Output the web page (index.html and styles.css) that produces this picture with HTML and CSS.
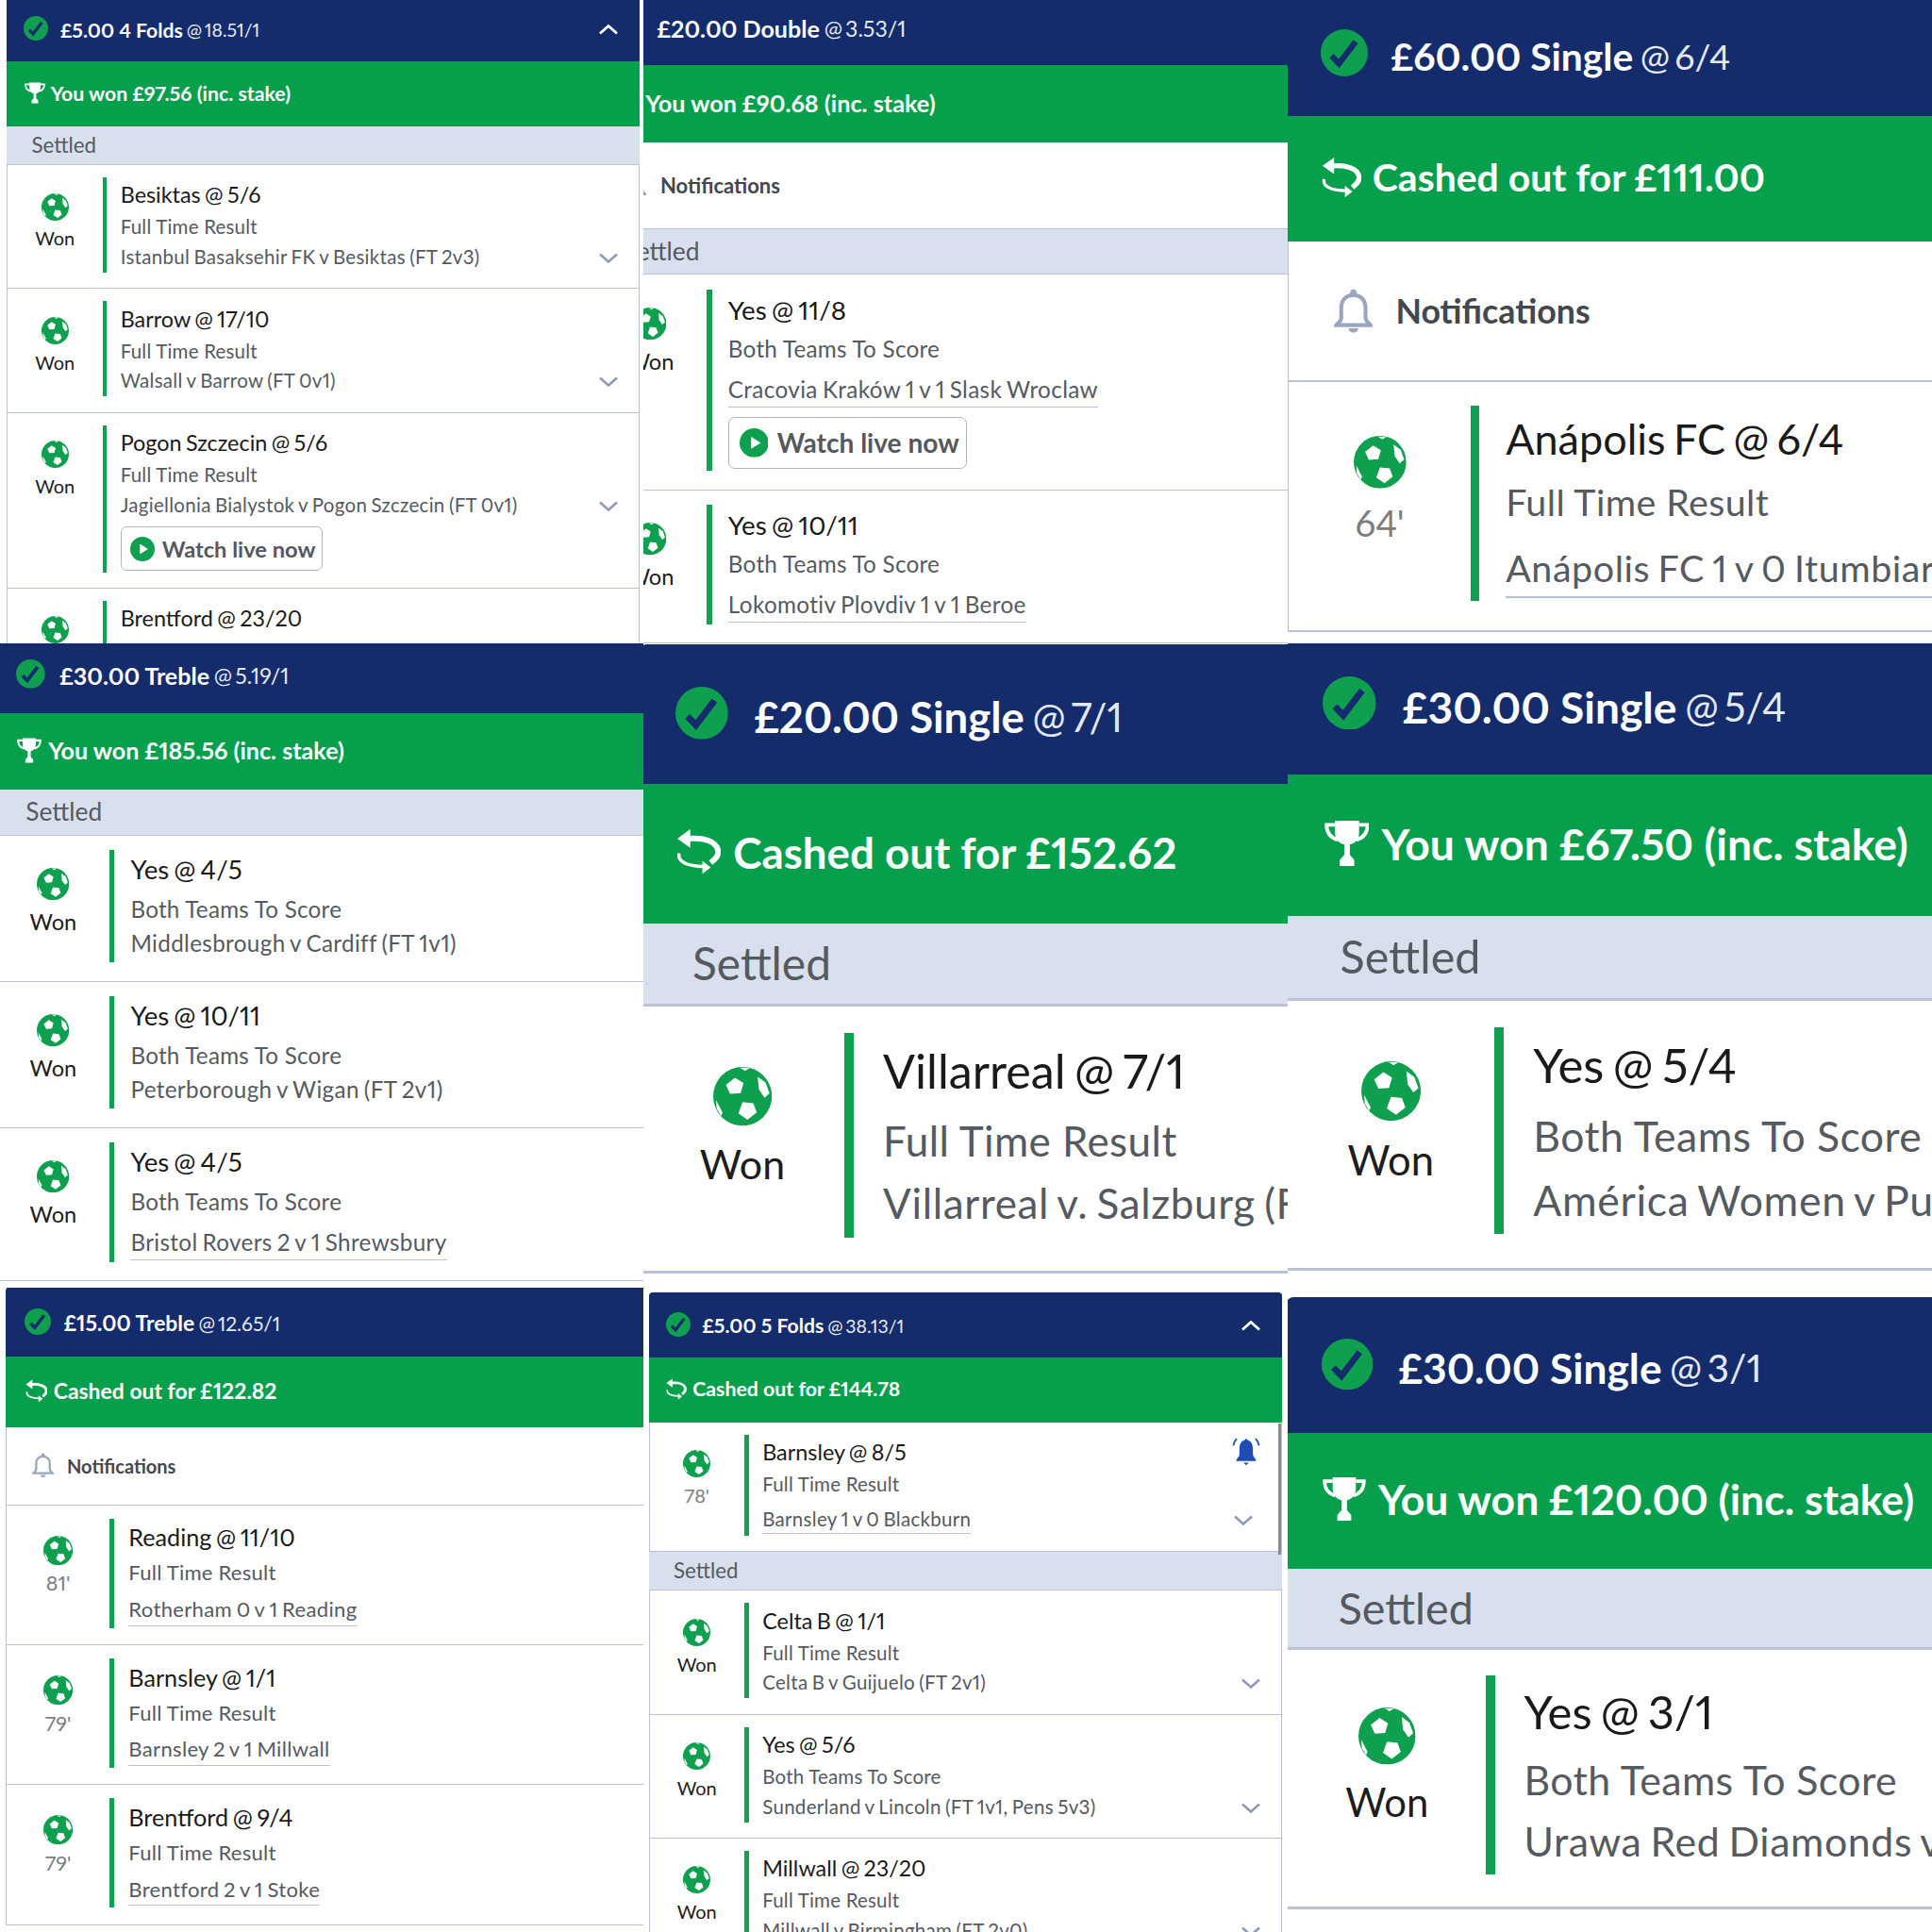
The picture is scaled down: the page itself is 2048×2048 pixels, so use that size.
FILE: index.html
```html
<!DOCTYPE html>
<html lang="en">
<head>
  <meta charset="UTF-8" />
  <title>Winning bets</title>
  <link rel="stylesheet" href="styles.css">
</head>
<body>
  <!-- shared icons -->
  <svg class="sprite" aria-hidden="true">
    <symbol id="check" viewBox="0 0 24 24">
      <circle cx="12" cy="12" r="12" fill="#0fa04f"/>
      <path d="M5.5 13.5 9.3 17.5 17.8 6.3" fill="none" stroke="#142c6c" stroke-width="3"/>
    </symbol>
    <symbol id="ball" viewBox="0 0 24 24">
      <circle cx="12" cy="12" r="12" fill="#0fa04f"/>
      <polygon fill="#fff" points="8.9,4.4 12.4,6.6 11.2,10.7 6.9,11 5.2,7.3"/>
      <polygon fill="#fff" points="18.2,4 21.4,6.4 23,10.8 21,12.6 18.7,9.2"/>
      <polygon fill="#fff" points="12,14.4 16.4,14.8 17.8,18.6 14,21.6 10.3,19"/>
      <polygon fill="#fff" points="1.2,13.6 3.8,18.6 3.2,20 1.4,17"/>
      <polygon fill="#fff" points="11,.3 15,.4 13,1.6"/>
    </symbol>
    <symbol id="trophy" viewBox="1 .5 22 23.500">
      <path fill="#fff" d="M6 1h12v6c0 3.600-2.500 6-6 6s-6-2.400-6-6z"/>
      <path fill="none" stroke="#fff" stroke-width="1.800" d="M6 3H1.800c0 4 2 6.500 5.500 7.500M18 3h4.200c0 4-2 6.500-5.500 7.500"/>
      <path fill="#fff" d="M10.600 12h2.800v6l2.200 2.500v3H8.400v-3l2.200-2.500z"/>
    </symbol>
    <symbol id="cashout" viewBox="0 0 24 24">
      <polygon fill="#fff" points="7.500,0 .5,5 7.500,10"/>
      <path fill="none" stroke="#fff" stroke-width="3" d="M7 5c7-.5 15 1 15.500 7 .2 2.500-1.500 4-4 6"/>
      <path fill="none" stroke="#fff" stroke-width="1.800" d="M1.500 13c-1 4 3.500 7 13.500 7"/>
      <polygon fill="#fff" points="14,17 18.500,20.500 14,24"/>
    </symbol>
    <symbol id="bell" viewBox="0 0 24 28">
      <path fill="none" stroke="#9aa5bf" stroke-width="2.400" d="M12 4c-5 0-7.500 3.500-7.500 8v6c0 2-2 3-3 4.500h21c-1-1.500-3-2.500-3-4.500v-6c0-4.500-2.500-8-7.500-8z"/>
      <circle cx="12" cy="2.500" r="2" fill="#9aa5bf"/>
      <path fill="#9aa5bf" d="M9 24.500h6c0 3.500-6 3.500-6 0z"/>
    </symbol>
    <symbol id="bell-on" viewBox="2 1.700 20 21">
      <path fill="#1e4db7" d="M12 3.500c-3.500 0-5 3-5 6.500v4c0 2-2 3-2.500 5h15c-.5-2-2.500-3-2.500-5v-4c0-3.500-1.500-6.500-5-6.500z"/>
      <circle cx="12" cy="3.500" r="1" fill="#1e4db7"/>
      <path fill="#1e4db7" d="M10 20.200h4l-2 2z"/>
      <path fill="none" stroke="#1e4db7" stroke-width="1.300" d="M5 2.500C3.500 4 2.800 5.500 2.500 7.500M19 2.500c1.500 1.500 2.200 3 2.500 5"/>
    </symbol>
    <symbol id="play" viewBox="0 0 24 24">
      <circle cx="12" cy="12" r="12" fill="#0fa04f"/>
      <polygon fill="#fff" points="9.500,7 17.500,12 9.500,17"/>
    </symbol>
    <symbol id="chev-down" viewBox="0 0 20 11">
      <path fill="none" stroke="#8d9ab8" stroke-width="2.600" d="M1 1.500 10 9.500l9-8"/>
    </symbol>
    <symbol id="chev-up" viewBox="0 0 20 11">
      <path fill="none" stroke="#fff" stroke-width="2.800" d="M1 9.500 10 1.500l9 8"/>
    </symbol>
  </svg>

  <div class="collage">

    <div class="tile tile-1">
      <div class="slip">
        <div class="slip-head">
          <svg class="check"><use href="#check"/></svg>
          <span class="stake">£5.00 4 Folds</span><span class="odds">@ 18.51/1</span>
          <svg class="head-chev"><use href="#chev-up"/></svg>
        </div>
        <div class="slip-result">
          <svg class="result-icon"><use href="#trophy"/></svg>
          <span>You won £97.56 (inc. stake)</span>
        </div>
        <div class="settled">Settled</div>
        <div class="leg">
          <div class="leg-status"><svg class="ball"><use href="#ball"/></svg><span class="status-text">Won</span></div>
          <div class="leg-bar"></div>
          <div class="leg-body">
            <div class="leg-title">Besiktas @ 5/6</div>
            <div class="leg-market">Full Time Result</div>
            <div class="leg-match">Istanbul Basaksehir FK v Besiktas (FT 2v3)</div>
          </div>
          <div class="leg-aside"><svg class="leg-chev"><use href="#chev-down"/></svg></div>
        </div>
        <div class="leg">
          <div class="leg-status"><svg class="ball"><use href="#ball"/></svg><span class="status-text">Won</span></div>
          <div class="leg-bar"></div>
          <div class="leg-body">
            <div class="leg-title">Barrow @ 17/10</div>
            <div class="leg-market">Full Time Result</div>
            <div class="leg-match">Walsall v Barrow (FT 0v1)</div>
          </div>
          <div class="leg-aside"><svg class="leg-chev"><use href="#chev-down"/></svg></div>
        </div>
        <div class="leg">
          <div class="leg-status"><svg class="ball"><use href="#ball"/></svg><span class="status-text">Won</span></div>
          <div class="leg-bar"></div>
          <div class="leg-body">
            <div class="leg-title">Pogon Szczecin @ 5/6</div>
            <div class="leg-market">Full Time Result</div>
            <div class="leg-match">Jagiellonia Bialystok v Pogon Szczecin (FT 0v1)</div>
            <div class="watch"><svg class="watch-icon"><use href="#play"/></svg>Watch live now</div>
          </div>
          <div class="leg-aside"><svg class="leg-chev"><use href="#chev-down"/></svg></div>
        </div>
        <div class="leg">
          <div class="leg-status"><svg class="ball"><use href="#ball"/></svg></div>
          <div class="leg-bar"></div>
          <div class="leg-body">
            <div class="leg-title">Brentford @ 23/20</div>
          </div>
        </div>
      </div>
    </div>

    <div class="tile tile-2">
      <div class="slip">
        <div class="slip-head">
          <svg class="check"><use href="#check"/></svg>
          <span class="stake">£20.00 Double</span><span class="odds">@ 3.53/1</span>
        </div>
        <div class="slip-result">
          <svg class="result-icon"><use href="#trophy"/></svg>
          <span>You won £90.68 (inc. stake)</span>
        </div>
        <div class="notify"><svg class="notify-icon"><use href="#bell"/></svg><span>Notifications</span></div>
        <div class="settled">Settled</div>
        <div class="leg">
          <div class="leg-status"><svg class="ball"><use href="#ball"/></svg><span class="status-text">Won</span></div>
          <div class="leg-bar"></div>
          <div class="leg-body">
            <div class="leg-title">Yes @ 11/8</div>
            <div class="leg-market">Both Teams To Score</div>
            <div class="leg-match in-play">Cracovia Kraków 1 v 1 Slask Wroclaw</div>
            <div class="watch"><svg class="watch-icon"><use href="#play"/></svg>Watch live now</div>
          </div>
        </div>
        <div class="leg">
          <div class="leg-status"><svg class="ball"><use href="#ball"/></svg><span class="status-text">Won</span></div>
          <div class="leg-bar"></div>
          <div class="leg-body">
            <div class="leg-title">Yes @ 10/11</div>
            <div class="leg-market">Both Teams To Score</div>
            <div class="leg-match in-play">Lokomotiv Plovdiv 1 v 1 Beroe</div>
          </div>
        </div>
      </div>
    </div>

    <div class="tile tile-3">
      <div class="slip">
        <div class="slip-head">
          <svg class="check"><use href="#check"/></svg>
          <span class="stake">£60.00 Single</span><span class="odds">@ 6/4</span>
        </div>
        <div class="slip-result">
          <svg class="result-icon"><use href="#cashout"/></svg>
          <span>Cashed out for £111.00</span>
        </div>
        <div class="notify"><svg class="notify-icon"><use href="#bell"/></svg><span>Notifications</span></div>
        <div class="leg">
          <div class="leg-status"><svg class="ball"><use href="#ball"/></svg><span class="status-text minute">64'</span></div>
          <div class="leg-bar"></div>
          <div class="leg-body">
            <div class="leg-title">Anápolis FC @ 6/4</div>
            <div class="leg-market">Full Time Result</div>
            <div class="leg-match in-play">Anápolis FC 1 v 0 Itumbiara</div>
          </div>
        </div>
      </div>
    </div>

    <div class="tile tile-4">
      <div class="slip">
        <div class="slip-head">
          <svg class="check"><use href="#check"/></svg>
          <span class="stake">£30.00 Treble</span><span class="odds">@ 5.19/1</span>
        </div>
        <div class="slip-result">
          <svg class="result-icon"><use href="#trophy"/></svg>
          <span>You won £185.56 (inc. stake)</span>
        </div>
        <div class="settled">Settled</div>
        <div class="leg">
          <div class="leg-status"><svg class="ball"><use href="#ball"/></svg><span class="status-text">Won</span></div>
          <div class="leg-bar"></div>
          <div class="leg-body">
            <div class="leg-title">Yes @ 4/5</div>
            <div class="leg-market">Both Teams To Score</div>
            <div class="leg-match">Middlesbrough v Cardiff (FT 1v1)</div>
          </div>
        </div>
        <div class="leg">
          <div class="leg-status"><svg class="ball"><use href="#ball"/></svg><span class="status-text">Won</span></div>
          <div class="leg-bar"></div>
          <div class="leg-body">
            <div class="leg-title">Yes @ 10/11</div>
            <div class="leg-market">Both Teams To Score</div>
            <div class="leg-match">Peterborough v Wigan (FT 2v1)</div>
          </div>
        </div>
        <div class="leg">
          <div class="leg-status"><svg class="ball"><use href="#ball"/></svg><span class="status-text">Won</span></div>
          <div class="leg-bar"></div>
          <div class="leg-body">
            <div class="leg-title">Yes @ 4/5</div>
            <div class="leg-market">Both Teams To Score</div>
            <div class="leg-match in-play">Bristol Rovers 2 v 1 Shrewsbury</div>
          </div>
        </div>
      </div>
    </div>

    <div class="tile tile-5">
      <div class="slip">
        <div class="slip-head">
          <svg class="check"><use href="#check"/></svg>
          <span class="stake">£20.00 Single</span><span class="odds">@ 7/1</span>
        </div>
        <div class="slip-result">
          <svg class="result-icon"><use href="#cashout"/></svg>
          <span>Cashed out for £152.62</span>
        </div>
        <div class="settled">Settled</div>
        <div class="leg">
          <div class="leg-status"><svg class="ball"><use href="#ball"/></svg><span class="status-text">Won</span></div>
          <div class="leg-bar"></div>
          <div class="leg-body">
            <div class="leg-title">Villarreal @ 7/1</div>
            <div class="leg-market">Full Time Result</div>
            <div class="leg-match">Villarreal v. Salzburg (F</div>
          </div>
        </div>
      </div>
    </div>

    <div class="tile tile-6">
      <div class="slip">
        <div class="slip-head">
          <svg class="check"><use href="#check"/></svg>
          <span class="stake">£30.00 Single</span><span class="odds">@ 5/4</span>
        </div>
        <div class="slip-result">
          <svg class="result-icon"><use href="#trophy"/></svg>
          <span>You won £67.50 (inc. stake)</span>
        </div>
        <div class="settled">Settled</div>
        <div class="leg">
          <div class="leg-status"><svg class="ball"><use href="#ball"/></svg><span class="status-text">Won</span></div>
          <div class="leg-bar"></div>
          <div class="leg-body">
            <div class="leg-title">Yes @ 5/4</div>
            <div class="leg-market">Both Teams To Score</div>
            <div class="leg-match">América Women v Pu</div>
          </div>
        </div>
      </div>
    </div>

    <div class="tile tile-7">
      <div class="slip">
        <div class="slip-head">
          <svg class="check"><use href="#check"/></svg>
          <span class="stake">£15.00 Treble</span><span class="odds">@ 12.65/1</span>
        </div>
        <div class="slip-result">
          <svg class="result-icon"><use href="#cashout"/></svg>
          <span>Cashed out for £122.82</span>
        </div>
        <div class="notify"><svg class="notify-icon"><use href="#bell"/></svg><span>Notifications</span></div>
        <div class="leg">
          <div class="leg-status"><svg class="ball"><use href="#ball"/></svg><span class="status-text minute">81'</span></div>
          <div class="leg-bar"></div>
          <div class="leg-body">
            <div class="leg-title">Reading @ 11/10</div>
            <div class="leg-market">Full Time Result</div>
            <div class="leg-match in-play">Rotherham 0 v 1 Reading</div>
          </div>
        </div>
        <div class="leg">
          <div class="leg-status"><svg class="ball"><use href="#ball"/></svg><span class="status-text minute">79'</span></div>
          <div class="leg-bar"></div>
          <div class="leg-body">
            <div class="leg-title">Barnsley @ 1/1</div>
            <div class="leg-market">Full Time Result</div>
            <div class="leg-match in-play">Barnsley 2 v 1 Millwall</div>
          </div>
        </div>
        <div class="leg">
          <div class="leg-status"><svg class="ball"><use href="#ball"/></svg><span class="status-text minute">79'</span></div>
          <div class="leg-bar"></div>
          <div class="leg-body">
            <div class="leg-title">Brentford @ 9/4</div>
            <div class="leg-market">Full Time Result</div>
            <div class="leg-match in-play">Brentford 2 v 1 Stoke</div>
          </div>
        </div>
      </div>
    </div>

    <div class="tile tile-8">
      <div class="slip">
        <div class="slip-head">
          <svg class="check"><use href="#check"/></svg>
          <span class="stake">£5.00 5 Folds</span><span class="odds">@ 38.13/1</span>
          <svg class="head-chev"><use href="#chev-up"/></svg>
        </div>
        <div class="slip-result">
          <svg class="result-icon"><use href="#cashout"/></svg>
          <span>Cashed out for £144.78</span>
        </div>
        <div class="leg">
          <div class="leg-status"><svg class="ball"><use href="#ball"/></svg><span class="status-text minute">78'</span></div>
          <div class="leg-bar"></div>
          <div class="leg-body">
            <div class="leg-title">Barnsley @ 8/5</div>
            <div class="leg-market">Full Time Result</div>
            <div class="leg-match in-play">Barnsley 1 v 0 Blackburn</div>
          </div>
          <div class="leg-aside has-bell"><svg class="bell-on"><use href="#bell-on"/></svg><svg class="leg-chev"><use href="#chev-down"/></svg></div>
        </div>
        <div class="settled">Settled</div>
        <div class="leg">
          <div class="leg-status"><svg class="ball"><use href="#ball"/></svg><span class="status-text">Won</span></div>
          <div class="leg-bar"></div>
          <div class="leg-body">
            <div class="leg-title">Celta B @ 1/1</div>
            <div class="leg-market">Full Time Result</div>
            <div class="leg-match">Celta B v Guijuelo (FT 2v1)</div>
          </div>
          <div class="leg-aside"><svg class="leg-chev"><use href="#chev-down"/></svg></div>
        </div>
        <div class="leg">
          <div class="leg-status"><svg class="ball"><use href="#ball"/></svg><span class="status-text">Won</span></div>
          <div class="leg-bar"></div>
          <div class="leg-body">
            <div class="leg-title">Yes @ 5/6</div>
            <div class="leg-market">Both Teams To Score</div>
            <div class="leg-match">Sunderland v Lincoln (FT 1v1, Pens 5v3)</div>
          </div>
          <div class="leg-aside"><svg class="leg-chev"><use href="#chev-down"/></svg></div>
        </div>
        <div class="leg">
          <div class="leg-status"><svg class="ball"><use href="#ball"/></svg><span class="status-text">Won</span></div>
          <div class="leg-bar"></div>
          <div class="leg-body">
            <div class="leg-title">Millwall @ 23/20</div>
            <div class="leg-market">Full Time Result</div>
            <div class="leg-match">Millwall v Birmingham (FT 2v0)</div>
          </div>
          <div class="leg-aside"><svg class="leg-chev"><use href="#chev-down"/></svg></div>
        </div>
      </div>
      <div class="scrollbar"></div>
    </div>

    <div class="tile tile-9">
      <div class="slip">
        <div class="slip-head">
          <svg class="check"><use href="#check"/></svg>
          <span class="stake">£30.00 Single</span><span class="odds">@ 3/1</span>
        </div>
        <div class="slip-result">
          <svg class="result-icon"><use href="#trophy"/></svg>
          <span>You won £120.00 (inc. stake)</span>
        </div>
        <div class="settled">Settled</div>
        <div class="leg">
          <div class="leg-status"><svg class="ball"><use href="#ball"/></svg><span class="status-text">Won</span></div>
          <div class="leg-bar"></div>
          <div class="leg-body">
            <div class="leg-title">Yes @ 3/1</div>
            <div class="leg-market">Both Teams To Score</div>
            <div class="leg-match">Urawa Red Diamonds v</div>
          </div>
        </div>
      </div>
    </div>

  </div>
</body>
</html>
```

FILE: styles.css
```css
:root {
  --navy: #142c6c;
  --green: #06a04d;
  --bar: #10a050;
  --settled: #d9e0ed;
  --line: #bac2d7;
  --grey: #555a60;
}

body {
  margin: 0;
  background: #fff;
  font-family: "Lato", "Noto Sans", sans-serif;
  font-variant-numeric: proportional-nums;
}

.sprite {
  display: none;
}

.collage {
  display: grid;
  grid-template-columns: 682px 683px 683px;
  grid-template-rows: 682px 683px 683px;
  width: 2048px;
  height: 2048px;
}

.tile {
  position: relative;
  overflow: hidden;
  background: #fff;
}

/* every screenshot in the collage is the same slip at a different zoom */
.slip {
  width: 671px;
}

.tile-1 .slip { margin: -4px 0 0 7px; }
.tile-2 .slip { zoom: 1.185; margin: -10.5px 0 0 -44.7px; }
.tile-3 .slip { zoom: 1.923; margin: -4.8px 0 0 0; }
.tile-4 .slip { zoom: 1.182; margin: -6.8px 0 0 -3.4px; }
.tile-5 .slip { zoom: 2.147; margin: .5px 0 0 -2.3px; }
.tile-6 .slip { zoom: 2.176; margin: -5px 0 0 -1px; }
.tile-7 .slip { zoom: 1.077; margin: -1px 0 0 6px; }
.tile-8 .slip { margin: 4.5px 0 0 5.5px; }
.tile-9 .slip { zoom: 2.09; margin: 4.6px 0 0 -.8px; }

.slip-head {
  display: flex;
  align-items: center;
  box-sizing: border-box;
  height: 69px;
  padding: 2.5px 0 0 18px;
  background: var(--navy);
  border-radius: 4px 4px 0 0;
  color: #fff;
  font-size: 21.2px;
}

.check {
  width: 26px;
  height: 26px;
  margin: 0 13px 3.500px 0;
}

.stake {
  font-weight: 700;
  margin-right: 4px;
}

.odds {
  font-size: 19.5px;
  font-weight: 400;
  word-spacing: -.12em;
  color: #e4e8f1;
}

.head-chev {
  width: 20px;
  height: 11px;
  margin: 0 23px 0 auto;
}

.slip-result {
  display: flex;
  align-items: center;
  box-sizing: border-box;
  height: 69px;
  padding: 0 0 2px 18.7px;
  background: var(--green);
  color: #fff;
  font-size: 21.3px;
  font-weight: 700;
}

.result-icon {
  width: 22px;
  height: 23px;
  margin-right: 6px;
}

.notify {
  display: flex;
  align-items: center;
  box-sizing: border-box;
  height: 77.5px;
  padding-left: 25px;
  background: #fff;
  border-bottom: 1.5px solid var(--line);
  border-left: 1px solid var(--line);
  color: #44474c;
  font-size: 18.6px;
  font-weight: 700;
}

.notify-icon {
  width: 21.5px;
  height: 25px;
  margin-right: 12.5px;
}

.settled {
  box-sizing: border-box;
  height: 41px;
  padding-left: 26.5px;
  background: var(--settled);
  border-bottom: 1.5px solid var(--line);
  color: var(--grey);
  font-size: 22.3px;
  line-height: 39.5px;
}

.leg {
  display: flex;
  padding: 13px 0 16.4px;
  background: #fff;
  border-bottom: 1.5px solid var(--line);
  border-left: 1px solid var(--line);
  border-right: 1px solid var(--line);
}

.leg-status {
  display: flex;
  flex-direction: column;
  align-items: center;
  flex: 0 0 100.5px;
  padding-top: 16.5px;
}

.ball {
  width: 29px;
  height: 29px;
  margin-bottom: 6.8px;
}

.status-text {
  font-size: 20px;
  line-height: 24px;
  color: #1d1d1d;
}

.status-text.minute {
  color: #7b7d80;
}

.leg-bar {
  flex: 0 0 4.7px;
  background: var(--bar);
}

.leg-body {
  display: flex;
  flex-direction: column;
  align-items: flex-start;
  flex: 1;
  margin-top: -.6px;
  padding: 0 0 1.5px 14.5px;
  white-space: nowrap;
}

.leg-title {
  font-size: 23.4px;
  line-height: 38px;
  word-spacing: -.07em;
  color: #1a1a1a;
}

.leg-market,
.leg-match {
  font-size: 20.5px;
  color: var(--grey);
}

.leg-market {
  letter-spacing: .2px;
  line-height: 31.5px;
}

.leg-match {
  letter-spacing: .3px;
  line-height: 30.5px;
  word-spacing: -.06em;
}

.leg-match.in-play {
  margin-top: 5.5px;
  border-bottom: 1.5px solid var(--line);
}

.watch {
  display: flex;
  align-items: center;
  box-sizing: border-box;
  width: 214px;
  height: 47px;
  margin-top: 8px;
  padding-left: 9px;
  border: 1.5px solid #b4b4b4;
  border-radius: 6px;
  color: #55585c;
  font-size: 23.7px;
  font-weight: 700;
}

.watch-icon {
  width: 26px;
  height: 26px;
  margin-right: 8px;
}

.leg-aside {
  display: flex;
  flex-direction: column;
  align-items: center;
  flex: 0 0 20px;
  margin-right: 22px;
  padding-top: 80px;
}

.leg-aside.has-bell {
  padding-top: 3px;
}

.bell-on {
  flex: none;
  width: 30px;
  height: 30px;
  margin: 0 0 52.5px 5px;
}

.leg-chev {
  flex: none;
  width: 20px;
  height: 11px;
}

.scrollbar {
  position: absolute;
  top: 144px;
  left: 673px;
  width: 3px;
  height: 139px;
  background: #8a8a8a;
}
```
